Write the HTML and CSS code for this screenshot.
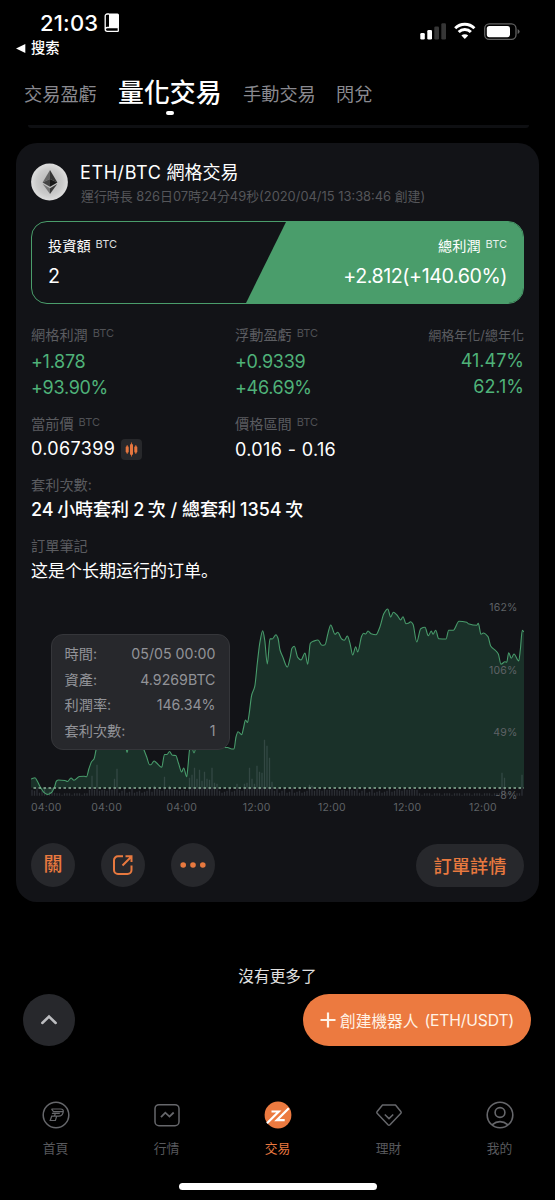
FILE: index.html
```html
<!DOCTYPE html>
<html lang="zh-Hant">
<head>
<meta charset="utf-8">
<title>量化交易</title>
<link rel="stylesheet" href="styles.css">
</head>
<body>
<header class="status">
  <div class="clock"><span class="time">21:03</span>
    <svg class="book" width="16" height="20" viewBox="0 0 16 20"><path d="M5 .5H13.500a1.500 1.500 0 0 1 1.500 1.500V14H5z" fill="#fff"/><path d="M5 1H3.200A2 2 0 0 0 1.200 3V16.300A2 2 0 0 0 3.200 18.300H14.600M1.400 16.200A2 2 0 0 1 3.300 14.500H14.300V18" fill="none" stroke="#fff" stroke-width="1.300"/></svg>
  </div>
  <div class="signals">
    <svg width="100" height="20" viewBox="0 0 100 20">
      <g fill="#fff"><rect x="0.300" y="11" width="4.500" height="6.500" rx="1.300"/><rect x="7.300" y="8" width="4.700" height="9.500" rx="1.300"/></g>
      <g fill="#363636"><rect x="14.300" y="4.500" width="4.700" height="13" rx="1.300"/><rect x="21.300" y="1.300" width="4.700" height="16.200" rx="1.300"/></g>
      <g fill="none" stroke="#fff" stroke-width="2.900"><path d="M35.200 6.200a13.500 13.500 0 0 1 19.200 0"/><path d="M38.700 10.100a8.500 8.500 0 0 1 12.200 0"/></g>
      <path d="M44.800 17 41.400 13.500a4.900 4.900 0 0 1 6.800 0z" fill="#fff"/>
      <rect x="64.700" y="1.800" width="31.300" height="15.500" rx="4.600" fill="none" stroke="#626262" stroke-width="1.300"/>
      <rect x="66.800" y="3.900" width="23.200" height="11.300" rx="2.600" fill="#fff"/>
      <path d="M97.600 7v5q2-1 2-2.500T97.600 7" fill="#626262"/>
    </svg>
  </div>
</header>
<div class="back"><svg width="10" height="9" viewBox="0 0 10 9"><path d="M0 4.500 9.300 0V9z" fill="#fff"/></svg><span>搜索</span></div>
<nav class="tabs">
  <span class="tab tab-a">交易盈虧</span><span class="tab active">量化交易</span><span class="tab tab-b">手動交易</span><span class="tab tab-c">閃兌</span>
</nav>
<div class="sliver"></div>

<main class="card">
  <div class="head">
    <svg class="coin" width="38" height="38" viewBox="0 0 38 38">
      <defs><radialGradient id="silver"><stop offset="0" stop-color="#b5b5b5"/><stop offset=".7" stop-color="#cbcbcb"/><stop offset="1" stop-color="#dedede"/></radialGradient></defs>
      <circle cx="18.500" cy="19" r="18.400" fill="url(#silver)"/>
      <path d="M19 7 11.600 19.400 19 16z" fill="#666"/><path d="M19 7 26.400 19.400 19 16z" fill="#333"/>
      <path d="M11.600 19.400 19 16V23.800z" fill="#444"/><path d="M26.400 19.400 19 16V23.800z" fill="#171717"/>
      <path d="M11.800 21 19 25.300V31z" fill="#777"/><path d="M26.200 21 19 25.300V31z" fill="#3a3a3a"/>
    </svg>
    <div>
      <h1 class="title"><span class="pair">ETH/BTC</span> 網格交易</h1>
      <div class="sub">運行時長 826日07時24分49秒(2020/04/15 13:38:46 創建)</div>
    </div>
  </div>

  <section class="summary">
    <div class="invest"><div class="sum-label">投資額<sup>BTC</sup></div><div class="sum-value">2</div></div>
    <div class="profit"><div class="sum-label">總利潤<sup>BTC</sup></div><div class="sum-value">+2.812(+140.60%)</div></div>
  </section>

  <section class="metrics">
    <div><div class="label">網格利潤<sup>BTC</sup></div><div class="value green">+1.878</div><div class="value green">+93.90%</div></div>
    <div><div class="label">浮動盈虧<sup>BTC</sup></div><div class="value green">+0.9339</div><div class="value green">+46.69%</div></div>
    <div class="right"><div class="label annual">網格年化/總年化</div><div class="value green">41.47%</div><div class="value green">62.1%</div></div>
  </section>
  <section class="metrics prices">
    <div><div class="label">當前價<sup>BTC</sup></div><div class="value price"><span>0.067399</span>
      <svg class="candles" width="21" height="21" viewBox="0 0 21 21"><rect width="21" height="21" rx="4" fill="#27282b"/><g stroke="#c9622f" stroke-width="1"><path d="M6.200 6v9M10.500 3.500v14M14.800 6v9"/></g><g fill="#e5763f"><rect x="4.700" y="7.300" width="3" height="6.400" rx="1.300"/><rect x="9" y="5" width="3" height="11" rx="1.300"/><rect x="13.300" y="7.300" width="3" height="6.400" rx="1.300"/></g></svg></div></div>
    <div><div class="label">價格區間<sup>BTC</sup></div><div class="value range">0.016 - 0.16</div></div>
  </section>
  <section class="field"><div class="label">套利次數:</div><div class="value count"><b>24</b>小時套利<b>2</b>次 / 總套利<b>1354</b>次</div></section>
  <section class="field"><div class="label">訂單筆記</div><div class="value note" lang="zh-Hans">这是个长期运行的订单。</div></section>

  <section class="chart">
    <svg id="chart" width="493" height="217" viewBox="31 600 493 217">
      <path id="area" fill="#1a3129"/>
      <path id="bars" stroke="#a9b4bb" stroke-opacity=".18" stroke-width="1.300"/>
      <path id="curve" fill="none" stroke="#489b6b" stroke-width="1.100"/>
      <path d="M33.500 788H524" stroke="#8db59c" stroke-width="1.700" stroke-dasharray="2.500 2.500"/>
      <g class="axis" text-anchor="end"><text x="517.500" y="611">162%</text><text x="517.500" y="673.700">106%</text><text x="517.500" y="736">49%</text><text x="517.500" y="798.700">-8%</text></g>
      <g class="axis"><text x="31" y="811.300">04:00</text><text x="91.300" y="811.300">04:00</text><text x="166.500" y="811.300">04:00</text><text x="242.700" y="811.300">12:00</text><text x="318" y="811.300">12:00</text><text x="393.500" y="811.300">12:00</text><text x="469" y="811.300">12:00</text></g>
    </svg>
    <div class="tip">
      <div><span>時間:</span><span>05/05 00:00</span></div>
      <div><span>資產:</span><span>4.9269BTC</span></div>
      <div><span>利潤率:</span><span>146.34%</span></div>
      <div><span>套利次數:</span><span>1</span></div>
    </div>
  </section>

  <footer class="actions">
    <button class="round">關</button>
    <button class="round"><svg width="22" height="22" viewBox="0 0 22 22" fill="none" stroke="#e8793f" stroke-width="2"><path d="M11 2.300H6a4 4 0 0 0-4 4V16a4 4 0 0 0 4 4h9.500a4 4 0 0 0 4-4v-4.500M10.500 11.500 19 3M13.500 2.300h6v5.800"/></svg></button>
    <button class="round"><svg width="26" height="6" viewBox="0 0 26 6" fill="#e8793f"><circle cx="3.200" cy="3" r="2.800"/><circle cx="13" cy="3" r="2.800"/><circle cx="22.800" cy="3" r="2.800"/></svg></button>
    <button class="details">訂單詳情</button>
  </footer>
</main>

<div class="end">沒有更多了</div>
<div class="floating">
  <button class="top"><svg width="18" height="12" viewBox="0 0 18 12"><path d="M2.300 9 9 2.500 15.700 9" fill="none" stroke="#bcbdc0" stroke-width="2.500" stroke-linecap="round"/></svg></button>
  <button class="create"><svg width="16" height="16" viewBox="0 0 16 16"><path d="M8 .5v15M.5 8h15" stroke="#fff3e6" stroke-width="2.200"/></svg><span class="create-cn">創建機器人</span><span class="create-en">(ETH/USDT)</span></button>
</div>

<nav class="bottom">
  <a><svg width="28" height="28" viewBox="0 0 28 28" fill="none" stroke="#66676b" stroke-width="1.500"><circle cx="14" cy="14" r="12.800"/><path d="M9.500 8h9q3.500 0 2.700 3.200l-.3 1q-.8 3-4 3h-2.200l-1.300 4.300H8.200l1.500-4.300h2.800l.8-2.800H9.900M9.500 8l2 2.700h9.500M13.300 12.400h4.500M12.500 15.200h2.500" stroke-width="1.200"/></svg><span>首頁</span></a>
  <a><svg width="28" height="28" viewBox="0 0 28 28" fill="none" stroke="#66676b" stroke-width="1.500"><rect x="2" y="3.700" width="24" height="21" rx="4"/><path d="m8 16.200 4.300-4.500 4.200 3.900 4.200-4.100" stroke-width="1.800"/></svg><span>行情</span></a>
  <a class="on"><svg width="28" height="28" viewBox="0 0 28 28"><circle cx="14" cy="14" r="13.400" fill="#ec7a40"/><path d="M7.500 10.500h7.300L3 22.300M24.800 7.200 12.800 19.200h7.900" fill="none" stroke="#fff" stroke-width="2.200"/></svg><span>交易</span></a>
  <a><svg width="28" height="28" viewBox="0 0 28 28" fill="none" stroke="#66676b" stroke-width="1.500" stroke-linejoin="round"><path d="M7.500 4h13l5.500 6.800q.5.800-.1 1.400L15 23.700q-1 1-2 0L2.100 12.200q-.6-.6-.1-1.400z"/><path d="m9.800 13.500 4.200 4.100 4.200-4.100"/></svg><span>理財</span></a>
  <a><svg width="28" height="28" viewBox="0 0 28 28" fill="none" stroke="#66676b" stroke-width="1.600"><circle cx="14" cy="14" r="12.800"/><circle cx="14" cy="11.500" r="4.900"/><path d="M6 23.800q8-6.500 16 0"/></svg><span>我的</span></a>
</nav>
<div class="home-bar"></div>
<script src="chart.js"></script>
</body>
</html>
```
FILE: styles.css
```css
* { box-sizing: border-box; }
body {
  margin: 0; width: 555px; height: 1200px; overflow: hidden; background: #000; color: #fff;
  font-family: Inter, "Noto Sans CJK TC", sans-serif; font-size: 14px;
}
button { border: 0; padding: 0; margin: 0; font: inherit; color: inherit; display: flex; align-items: center; justify-content: center; }
.status { display: flex; justify-content: space-between; height: 36px; padding: 10px 35px 0 40px; }
.clock { display: flex; gap: 5px; height: 26px; line-height: 26px; }
.time { font-size: 22px; font-weight: 500; width: 59px; letter-spacing: .2px; }
.book { margin-top: 3px; }
.signals { padding-top: 12px; height: 26px; }
.back { display: flex; gap: 5px; align-items: center; height: 24px; padding-left: 16px; line-height: 26px; font-size: 14.300px; font-weight: 500; }
.tabs { display: flex; height: 68px; align-items: center; padding-left: 24px; color: #89898f; font-size: 18.200px; white-space: nowrap; }
.tab { height: 28px; line-height: 29px; }
.tab-a { width: 94px; }
.active { position: relative; width: 125px; height: 36px; line-height: 37px; margin-top: -4px; font-size: 25.900px; font-weight: 500; color: #fff; }
.active::after { content: ""; position: absolute; left: 48px; top: 37px; width: 8px; height: 4px; border-radius: 2px; background: #fff; }
.tab-b { width: 93px; }
.sliver { height: 3px; margin: -3px 26px 0 28px; background: #0e0f12; border-radius: 0 0 3px 3px; }
.card { width: 523px; height: 759px; margin: 15px 0 0 16px; padding: 17px 15px 15px; border-radius: 21px; background: #121317; }
.head { display: flex; gap: 12px; height: 49px; white-space: nowrap; }
.coin { margin-top: 3px; }
.title { margin: 0; height: 24px; line-height: 25px; font-size: 18px; font-weight: 400; margin-left: -1px; }
.pair { letter-spacing: .6px; }
.sub { height: 24px; line-height: 25px; font-size: 12.900px; color: #55565a; }
.summary { display: flex; justify-content: space-between; height: 83px; margin-top: 12px; border: 1.500px solid #4a9d6b; border-radius: 16px; overflow: hidden; }
.invest { padding: 13px 0 0 16px; }
.profit { width: 277px; padding: 13px 16px 0 0; text-align: right; background: #4a9d6b; clip-path: polygon(40px 0, 100% 0, 100% 100%, 0 100%); }
.sum-label { height: 22px; line-height: 22px; font-size: 14.200px; }
sup { font-size: 11px; line-height: 10px; vertical-align: 3.500px; margin-left: 5px; opacity: .85; }
.sum-value { height: 29px; margin-top: 4px; line-height: 30px; font-size: 19.700px; letter-spacing: -.45px; }
.metrics { display: grid; grid-template-columns: 204px 1fr 130px; margin-top: 21px; }
.label { height: 20px; line-height: 20px; color: #5b5c60; font-size: 14.200px; white-space: nowrap; }
.annual { font-size: 13px; }
.value { height: 26px; line-height: 26px; font-size: 18px; white-space: nowrap; }
.metrics .label { margin-bottom: 3px; }
.green { color: #4fb279; letter-spacing: -.3px; line-height: 28px; }
.right { text-align: right; }
.right .green { letter-spacing: 0; line-height: 26px; }
.metrics.prices { margin-top: 14px; }
.metrics.prices .label { margin-bottom: 2px; }
.metrics.prices .value { line-height: 28px; letter-spacing: .35px; }
.price { display: flex; align-items: center; gap: 6px; }
.field { margin-top: 13px; }
.field .label { margin-bottom: 2px; }
.count { font-weight: 500; font-size: 18px; }
.count b { font-weight: 500; margin: 0 3.500px 0 4px; }
.count b:first-child { margin-left: 0; }
.note { font-size: 17px; line-height: 27px; font-family: Inter, "Noto Sans CJK SC", sans-serif; }
.chart { position: relative; height: 217px; margin-top: 16px; }
.chart svg { display: block; }
.axis { font-size: 10.500px; fill: #5f6266; letter-spacing: .2px; }
.tip { position: absolute; left: 19.500px; top: 34px; width: 179px; height: 116px; padding: 6px 13px 0; border: 1px solid #35363a; border-radius: 12px; background: #27282c; color: #929398; }
.tip div { display: flex; justify-content: space-between; height: 25.500px; line-height: 25.500px; font-size: 14.200px; }
.actions { display: flex; align-items: center; gap: 26px; margin-top: 26px; height: 44px; color: #e8793f; }
.round { width: 44px; height: 44px; border-radius: 50%; background: #27282c; font-size: 19px; font-weight: 500; line-height: 42px; }
.details { width: 108px; height: 43px; margin-left: auto; border-radius: 22px; background: #27282c; font-size: 18.200px; font-weight: 500; }
.end { height: 24px; line-height: 25px; margin-top: 62px; text-align: center; font-size: 15.700px; color: #e0e0e0; }
.floating { display: flex; justify-content: space-between; margin-top: 6px; padding: 0 24px 0 23px; }
.top { width: 52px; height: 52px; border-radius: 50%; background: #27282c; }
.create { width: 228px; height: 52px; border-radius: 26px; background: #ec7a40; color: #fff3e6; font-size: 15.700px; gap: 4px; white-space: nowrap; }
.create-en { margin-left: 2px; letter-spacing: -.15px; }
.bottom { display: flex; margin-top: 55px; height: 82px; color: #58595d; }
.bottom a { width: 111px; display: flex; flex-direction: column; align-items: center; font-size: 12.800px; }
.bottom span { height: 18px; line-height: 19px; margin-top: 10px; }
.bottom .on { color: #ec7a40; }
.home-bar { width: 198px; height: 6.500px; margin-left: 179px; border-radius: 4px; background: #fff; }
```
FILE: chart.js
```js
const points = [[31,779],[35,777.7],[37.5,781.5],[40,786.5],[44,792.5],[47.5,794.5],[51.5,792.5],[54.5,787],[56.5,781],[58.5,780],[65,780.5],[67.5,781.5],[71,778],[74,780.3],[79.5,776.5],[84,776.3],[86.5,776.7],[89,768.5],[91.7,761.5],[94,759],[96,750],[98,742],[125,742],[127,752.5],[129,745],[142,745],[144,750],[146.7,757],[149.5,764.7],[151,764.7],[154,761],[156.7,763],[161.7,767.3],[164.5,754.5],[167,754.5],[169.5,751.5],[172.5,755.3],[175.7,755.5],[178.5,763.3],[181.7,772],[183.7,768],[186.7,776.7],[188,766],[189.5,750],[191,744],[194,753],[197,744],[220,746],[224,747.5],[227.5,747.5],[231.7,749],[234,749],[236,737],[238,731.7],[241.7,734.7],[243.5,728],[245.5,720],[247.5,722.5],[249,715],[251.7,695],[254.7,686.7],[257.3,663.3],[260,641.7],[262.7,630.7],[264.7,640],[267.3,664],[270,638.7],[272.3,639],[276,634.7],[278,638.3],[280,650],[282.7,656.7],[287.3,667],[290,658.3],[292,648.3],[294.3,646.3],[297.7,657.3],[301,660],[305,653],[307.7,664.3],[310.3,643.3],[313.3,641.3],[318,640],[322,645.3],[325,644.7],[328,633.3],[330.7,625],[335,634.3],[337.7,632.3],[341.7,639],[344.3,640.3],[347.3,636],[350,643.3],[352.7,655],[355.7,646.7],[357.7,652],[361.7,636],[363.7,633.3],[365.7,634],[368,631],[371,633.7],[376,634.7],[380,626.7],[384,613.3],[387.7,609],[390.7,617],[393.3,612.3],[397,615],[400.7,620],[403,616.7],[406,623.7],[408.3,623.3],[410.7,621.7],[413,624.3],[416.7,642],[420.7,628.7],[425,627.3],[428.3,635.7],[431.3,631],[433,634.3],[435.7,630.3],[438.7,638.7],[446,639],[448.7,630.3],[453.3,630.3],[459,621.3],[466.7,622.3],[468.3,623.7],[476.7,625.3],[478.3,623.3],[481,634.3],[483.3,633],[488,636.7],[490.7,646],[496,651],[498.3,654],[501,664.3],[505,661.7],[506.7,662.3],[508.7,652.7],[511.3,658.3],[514,654],[518.7,661],[520.3,650],[522.3,630.3],[524,631.7]];

// Monotone cubic interpolation keeps the curve inside each local peak.
const n = points.length;
const slopes = [];
for (let i = 0; i < n - 1; i++) slopes.push((points[i + 1][1] - points[i][1]) / (points[i + 1][0] - points[i][0]));
const tangents = points.map((_, i) => {
  if (i === 0 || i === n - 1) return 0;
  const a = slopes[i - 1], b = slopes[i];
  return a * b <= 0 ? 0 : 2 * a * b / (a + b);
});
let line = `M${points[0]}`;
for (let i = 0; i < n - 1; i++) {
  const [x0, y0] = points[i], [x1, y1] = points[i + 1], d = (x1 - x0) / 3;
  line += `C${x0 + d} ${y0 + tangents[i] * d} ${x1 - d} ${y1 - tangents[i + 1] * d} ${x1} ${y1}`;
}
document.getElementById('curve').setAttribute('d', line);
document.getElementById('area').setAttribute('d', line + 'V787.7H31Z');

const spikes = {24:20,26:31,33:17,34:27,49:10,53:19,55:10,63:18,64:21,65:28,66:17,67:26,68:15,69:24,70:17,71:16,72:28,73:13,74:12,82:12,85:12,86:13,87:28,88:17,89:12,90:30,91:24,92:23,93:56,94:50,95:38,96:14,111:11,112:10,188:23,189:18,196:21};
const base = [6,5,8,6,4,5,7,3];
let bars = '';
for (let i = 0; i < 197; i++) {
  let h = spikes[i] || base[(i * 5 + (i >> 2)) % 8];
  if (!spikes[i] && (i > 9 && i < 23 || i > 154)) h = i % 4 === 0 ? 1 : 2.5;
  bars += `M${(32 + i * 2.5).toFixed(1)} 795.7v-${h}`;
}
document.getElementById('bars').setAttribute('d', bars);
```
